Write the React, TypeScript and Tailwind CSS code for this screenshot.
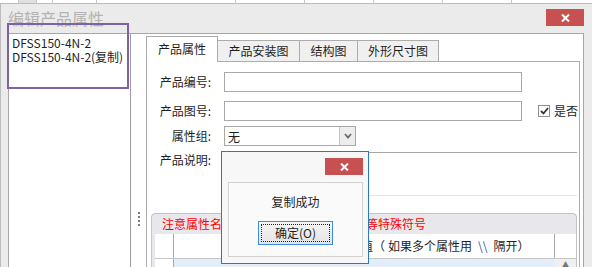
import React from "react";

const XIcon = ({ size = 9 }: { size?: number }) => (
  <svg width={size} height={size - 1} viewBox="0 0 9 8">
    <path d="M1 0.5 L8 7.5 M8 0.5 L1 7.5" stroke="white" strokeWidth="2" />
  </svg>
);

export default function App() {
  const font = { fontFamily: '"Noto Sans CJK SC", "Noto Sans", sans-serif' };
  return (
    <div
      className="relative w-[592px] h-[267px] overflow-hidden bg-[#ebebeb] text-[12px] text-[#1e1e1e]"
      style={font}
    >
      {/* background app strip */}
      <div className="h-[3px] bg-white flex">
        <div className="w-[19px] border-r border-[#c8c8c8]" />
        <div className="w-[18px] border-r border-[#c8c8c8] bg-[#e0e0e0]" />
        <div className="w-[16px] border-r border-[#c8c8c8]" />
        <div className="w-[44px] border-r border-[#c8c8c8]" />
        <div className="w-[139px] border-r border-[#c8c8c8]" />
        <div className="w-[69px] border-r border-[#c8c8c8]" />
        <div className="w-[69px] border-r border-[#c8c8c8]" />
        <div className="w-[69px] border-r border-[#c8c8c8]" />
        <div className="w-[69px] border-r border-[#c8c8c8]" />
        <div className="flex-1" />
      </div>

      {/* dialog */}
      <div className="h-[264px] border-t border-l border-[#bcbcbc] flex flex-col">
        {/* title bar */}
        <div className="h-[29px] flex items-start justify-between">
          <div className="pl-[7px] pt-[4px] text-[16px] leading-[20px] text-[#b3b3b3]">
            编辑产品属性
          </div>
          <div className="mt-[5px] mr-[8px] w-[38px] h-[17px] bg-[#c75050] flex items-center justify-center">
            <XIcon />
          </div>
        </div>

        {/* body */}
        <div className="flex-1 pl-[7px] overflow-hidden">
          <div className="w-[576px] h-full border-t border-l border-r border-[#a7a7a7] bg-white flex">
            {/* list */}
            <div className="w-[122px] border-r border-[#9a9aac] pl-[3px] pt-[2px] leading-[14px] text-[12px]">
              <div>DFSS150-4N-2</div>
              <div>DFSS150-4N-2(复制)</div>
            </div>
            {/* splitter */}
            <div className="w-[15px] flex flex-col items-center pt-[178px] gap-[2px]">
              <div className="w-[2px] h-[2px] bg-[#7a7a7a]" />
              <div className="w-[2px] h-[2px] bg-[#7a7a7a]" />
              <div className="w-[2px] h-[2px] bg-[#7a7a7a]" />
              <div className="w-[2px] h-[2px] bg-[#7a7a7a]" />
            </div>
            {/* right */}
            <div className="flex-1 pr-[3px] pt-[2px] flex flex-col">
              {/* tabs */}
              <div className="h-[25px] flex items-end">
                <div className="relative z-10 w-[72px] h-[26px] -mb-[1px] border-l border-t border-r border-[#acacac] bg-white flex items-center justify-center pb-[2px]">
                  产品属性
                </div>
                <div className="-ml-[1px] w-[83px] h-[21px] border-l border-t border-r border-[#acacac] bg-[#f0f0f0] flex items-center justify-center">
                  产品安装图
                </div>
                <div className="-ml-[1px] w-[59px] h-[21px] border-l border-t border-r border-[#acacac] bg-[#f0f0f0] flex items-center justify-center">
                  结构图
                </div>
                <div className="-ml-[1px] w-[82px] h-[21px] border-l border-t border-r border-[#acacac] bg-[#f0f0f0] flex items-center justify-center">
                  外形尺寸图
                </div>
              </div>
              {/* panel */}
              <div className="flex-1 border-l border-t border-r border-[#acacac] bg-white overflow-hidden flex flex-col">
                <div className="mt-[10px] flex items-center h-[20px]">
                  <div className="w-[64px] text-right">产品编号:</div>
                  <div className="ml-[13px] w-[298px] h-[20px] border border-[#a9a9a9]" />
                </div>
                <div className="mt-[9px] flex items-center h-[20px] whitespace-nowrap">
                  <div className="w-[64px] text-right shrink-0">产品图号:</div>
                  <div className="ml-[13px] w-[298px] h-[20px] border border-[#a9a9a9] shrink-0" />
                  <div className="ml-[16px] w-[12px] h-[12px] border border-[#8f8f8f] bg-white flex items-center justify-center shrink-0">
                    <svg width="9" height="8" viewBox="0 0 9 8">
                      <path d="M1 4 L3.5 6.5 L8 1" stroke="#333" strokeWidth="1.8" fill="none" />
                    </svg>
                  </div>
                  <div className="ml-[4px] shrink-0">是否</div>
                </div>
                <div className="mt-[5px] flex items-center h-[20px]">
                  <div className="w-[64px] text-right">属性组:</div>
                  <div className="ml-[13px] w-[132px] h-[20px] border border-[#a9a9a9] flex">
                    <div className="flex-1 pl-[3px] leading-[18px] pt-[1px]">无</div>
                    <div className="w-[16px] border-l border-[#c4c4c4] bg-[#ededed] flex items-center justify-center">
                      <svg width="8" height="6" viewBox="0 0 8 6">
                        <path d="M1 1 L4 4.5 L7 1" stroke="#6a6a6a" strokeWidth="1.8" fill="none" />
                      </svg>
                    </div>
                  </div>
                </div>
                <div className="mt-[6px] flex items-start">
                  <div className="w-[64px] text-right leading-[16px] shrink-0">产品说明:</div>
                  <div className="ml-[13px] mr-[2px] flex-1 h-[44px] border-t border-b border-t-[#a6a6a6] border-b-[#dde5ee]" />
                </div>
                {/* grid */}
                <div className="mt-[17px] ml-[4px] mr-[2px] flex-1 border border-[#c3c3c8] rounded-t-[4px] bg-[#e8e8ec] flex flex-col">
                  <div className="h-[20px] pl-[10px] leading-[20px] text-[#ff0000] whitespace-nowrap">
                    注意属性名和属性值中不能含逗号分号等特殊符号
                  </div>
                  <div className="ml-[3px] flex-1 bg-white flex flex-col">
                    <div className="h-[25px] flex border-b border-[#c6c6c6]">
                      <div className="w-[19px] border-r border-[#a9a9a9]" />
                      <div className="w-[158px] border-r border-[#a9a9a9] flex items-center justify-center">
                        属性名
                      </div>
                      <div className="w-[223px] border-r border-[#a9a9a9] pl-[5px] flex items-center whitespace-nowrap">
                        属性值<span className="mr-[3px]">（</span>如果多个属性用<span className="text-[#2f5c9a] mx-[6px]">\\</span>隔开）
                      </div>
                      <div className="w-[21px]" />
                    </div>
                    <div className="flex-1 flex">
                      <div className="w-[19px] border-r border-[#a9a9a9]" />
                      <div className="flex-1 bg-[#e4eefa]" />
                      <div className="w-[21px] bg-[#f0f0f0] flex justify-center pt-[1px] text-[7px] leading-[8px] text-[#777]">
                        ▲
                      </div>
                    </div>
                  </div>
                </div>
              </div>
            </div>
          </div>
        </div>
      </div>

      {/* annotation rectangle */}
      <div className="absolute left-[7px] top-[23px] w-[122px] h-[66px] border-2 border-[#7e62a3]" />

      {/* popup */}
      <div className="absolute left-[221px] top-[151px] w-[148px] h-[113px] border border-[#2a78c0] bg-[#f7f7f7]">
        <div className="h-[30px] flex justify-end items-start">
          <div className="mt-[6px] mr-[5px] w-[38px] h-[17px] bg-[#c75050] flex items-center justify-center">
            <XIcon />
          </div>
        </div>
        <div className="ml-[6px] w-[135px] h-[75px] border border-[#d2d2d2] bg-[#fafafa] flex flex-col items-center">
          <div className="pt-[11px] leading-[16px] text-[12px]">复制成功</div>
          <div className="mt-[11px] w-[75px] h-[24px] border border-[#3c8ee0] bg-gradient-to-b from-[#f5f5f5] to-[#e3e3e3] p-[2px]">
            <div className="w-full h-full border border-dotted border-[#222] flex items-center justify-center leading-[16px]">
              确定(O)
            </div>
          </div>
        </div>
      </div>
    </div>
  );
}
